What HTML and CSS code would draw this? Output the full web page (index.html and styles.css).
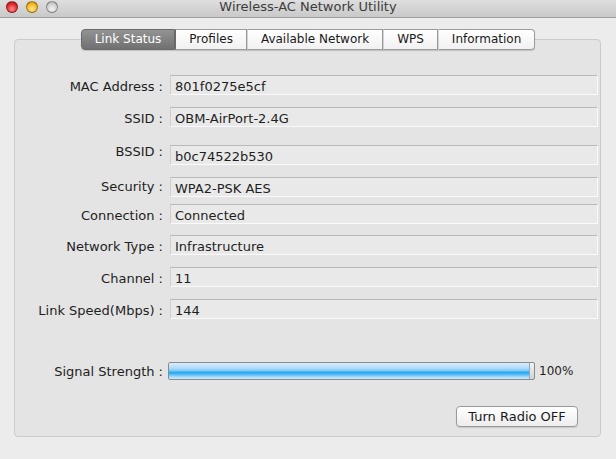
FILE: index.html
```html
<!DOCTYPE html>
<html lang="en">

<head>
    <meta charset="UTF-8">
    <meta name="viewport" content="width=device-width, initial-scale=1.0">
    <title>Wireless-AC Network Utility</title>

    <link rel="stylesheet" href="styles.css">
</head>

<body>
    <div class="window">
        <div class="titlebar">
            <div class="lights">
                <span class="light red"></span>
                <span class="light orange"></span>
                <span class="light grey"></span>
            </div>
            <div class="title">Wireless-AC Network Utility</div>
        </div>

        <div class="content">
            <div class="tabs">
                <div class="tab active">Link Status</div>
                <div class="tab">Profiles</div>
                <div class="tab">Available Network</div>
                <div class="tab">WPS</div>
                <div class="tab">Information</div>
            </div>

            <div class="panel">
                <div class="row">
                    <label>MAC Address :</label>
                    <div class="field">801f0275e5cf</div>
                </div>
                <div class="row r2">
                    <label>SSID :</label>
                    <div class="field">OBM-AirPort-2.4G</div>
                </div>
                <div class="row r3">
                    <label class="raise-lg">BSSID :</label>
                    <div class="field">b0c74522b530</div>
                </div>
                <div class="row r4">
                    <label class="raise-sm">Security :</label>
                    <div class="field">WPA2-PSK AES</div>
                </div>
                <div class="row r5">
                    <label>Connection :</label>
                    <div class="field">Connected</div>
                </div>
                <div class="row r6">
                    <label>Network Type :</label>
                    <div class="field">Infrastructure</div>
                </div>
                <div class="row r7">
                    <label>Channel :</label>
                    <div class="field">11</div>
                </div>
                <div class="row r8">
                    <label>Link Speed(Mbps) :</label>
                    <div class="field">144</div>
                </div>

                <div class="signal">
                    <label>Signal Strength :</label>
                    <div class="meter">
                        <div class="meter-fill" style="width: 99%"></div>
                    </div>
                    <span class="percent">100%</span>
                </div>

                <div class="actions">
                    <button type="button">Turn Radio OFF</button>
                </div>
            </div>
        </div>
    </div>
</body>

</html>
```

FILE: styles.css
```css
/* Global reset */

* {
    margin: 0;
    padding: 0;
    box-sizing: border-box;
}

body {
    font-family: 'DejaVu Sans', Verdana, sans-serif;
    background-color: #ececec;
    color: #1e1e1e;
    width: 616px;
    height: 459px;
    overflow: hidden;
}

/* Title bar */

.titlebar {
    height: 18px;
    background: linear-gradient(#dedede, #c9c9c9);
    border-bottom: 1px solid #9c9c9c;
    display: flex;
    align-items: center;
    position: relative;
}

.lights {
    display: flex;
    gap: 8px;
    padding-left: 6px;
    margin-top: -4px;
}

.light {
    width: 12px;
    height: 12px;
    border-radius: 50%;
    border: 1px solid rgba(0, 0, 0, 0.35);
}

.light.red {
    background: radial-gradient(circle at 50% 70%, #ff8f8f, #e0262a 60%, #a5121a);
}

.light.orange {
    background: radial-gradient(circle at 50% 70%, #ffe79a, #f4b71b 60%, #b97a08);
}

.light.grey {
    background: radial-gradient(circle at 50% 70%, #f4f4f4, #cfcfcf 60%, #9f9f9f);
}

.title {
    position: absolute;
    left: 0;
    right: 0;
    top: 0;
    text-align: center;
    font-size: 13px;
    line-height: 14px;
    color: #3c3c3c;
}

/* Tabs */

.content {
    padding-top: 11px;
}

.tabs {
    display: flex;
    justify-content: center;
    margin-bottom: -11px;
    position: relative;
    z-index: 1;
}

.tab {
    height: 21px;
    line-height: 19px;
    padding: 0 13px;
    font-size: 12px;
    color: #1a1a1a;
    background: linear-gradient(#ffffff, #f1f1f1);
    border: 1px solid #9b9b9b;
    border-left: 1px solid #d4d4d4;
    box-shadow: 0 1px 1px rgba(0, 0, 0, 0.15);
}

.tab:first-child {
    border-left: 1px solid #8a8a8a;
    border-radius: 4px 0 0 4px;
}

.tab:last-child {
    border-radius: 0 4px 4px 0;
}

.tab.active {
    color: #fff;
    background: linear-gradient(#939393, #707070);
    border-color: #6a6a6a;
}

.tab.active + .tab {
    border-left-color: #6a6a6a;
}

/* Group panel */

.panel {
    margin: 0 15px 0 14px;
    height: 398px;
    background-color: #e4e4e4;
    border: 1px solid #cbcbcb;
    border-radius: 4px;
    padding-top: 35px;
}

.row {
    display: flex;
    align-items: center;
}

.row label,
.signal label {
    width: 148px;
    text-align: right;
    font-size: 13px;
    padding-top: 3px;
}

.r2 { margin-top: 12px; }
.r3 { margin-top: 17px; }
.r4 { margin-top: 12px; }
.r5 { margin-top: 7px; }
.r6 { margin-top: 11px; }
.r7 { margin-top: 12px; }
.r8 { margin-top: 12px; }

.row label.raise-lg {
    padding-top: 0;
    padding-bottom: 6px;
}

.row label.raise-sm {
    padding-top: 0;
    padding-bottom: 2px;
}

.field {
    flex: 1;
    margin-left: 7px;
    margin-right: 2px;
    height: 20px;
    padding: 3px 0 0 4px;
    font-size: 13px;
    line-height: 16px;
    background-color: #e9e9e9;
    border-top: 1px solid #b9b9b9;
    border-left: 1px solid #cfcfcf;
    border-right: 1px solid #fafafa;
    border-bottom: 1px solid #fafafa;
}

/* Signal strength */

.signal {
    display: flex;
    align-items: center;
    margin-top: 43px;
}

.signal label {
    padding-top: 0;
}

.meter {
    width: 367px;
    height: 18px;
    margin-left: 5px;
    border: 1px solid #8c8c8c;
    border-radius: 2px;
    background: linear-gradient(#f4f4f4, #d2d2d2);
    overflow: hidden;
}

.meter-fill {
    height: 100%;
    background: linear-gradient(#d6ecfc 0%, #b4dcfa 32%, #7cc7f7 48%, #22a8f5 60%, #58bdf6 72%, #aadbfa 88%, #cce9fc 100%);
    border-right: 1px solid #8aa9c4;
}

.percent {
    margin-left: 4px;
    font-size: 12px;
}

/* Button */

.actions {
    display: flex;
    justify-content: flex-end;
    margin-top: 26px;
    padding-right: 22px;
}

button {
    width: 122px;
    height: 21px;
    font-family: inherit;
    font-size: 13px;
    color: #1a1a1a;
    background: linear-gradient(#ffffff, #ededed);
    border: 1px solid #9a9a9a;
    border-radius: 4px;
    box-shadow: 0 1px 1px rgba(0, 0, 0, 0.12);
    cursor: pointer;
}
```
